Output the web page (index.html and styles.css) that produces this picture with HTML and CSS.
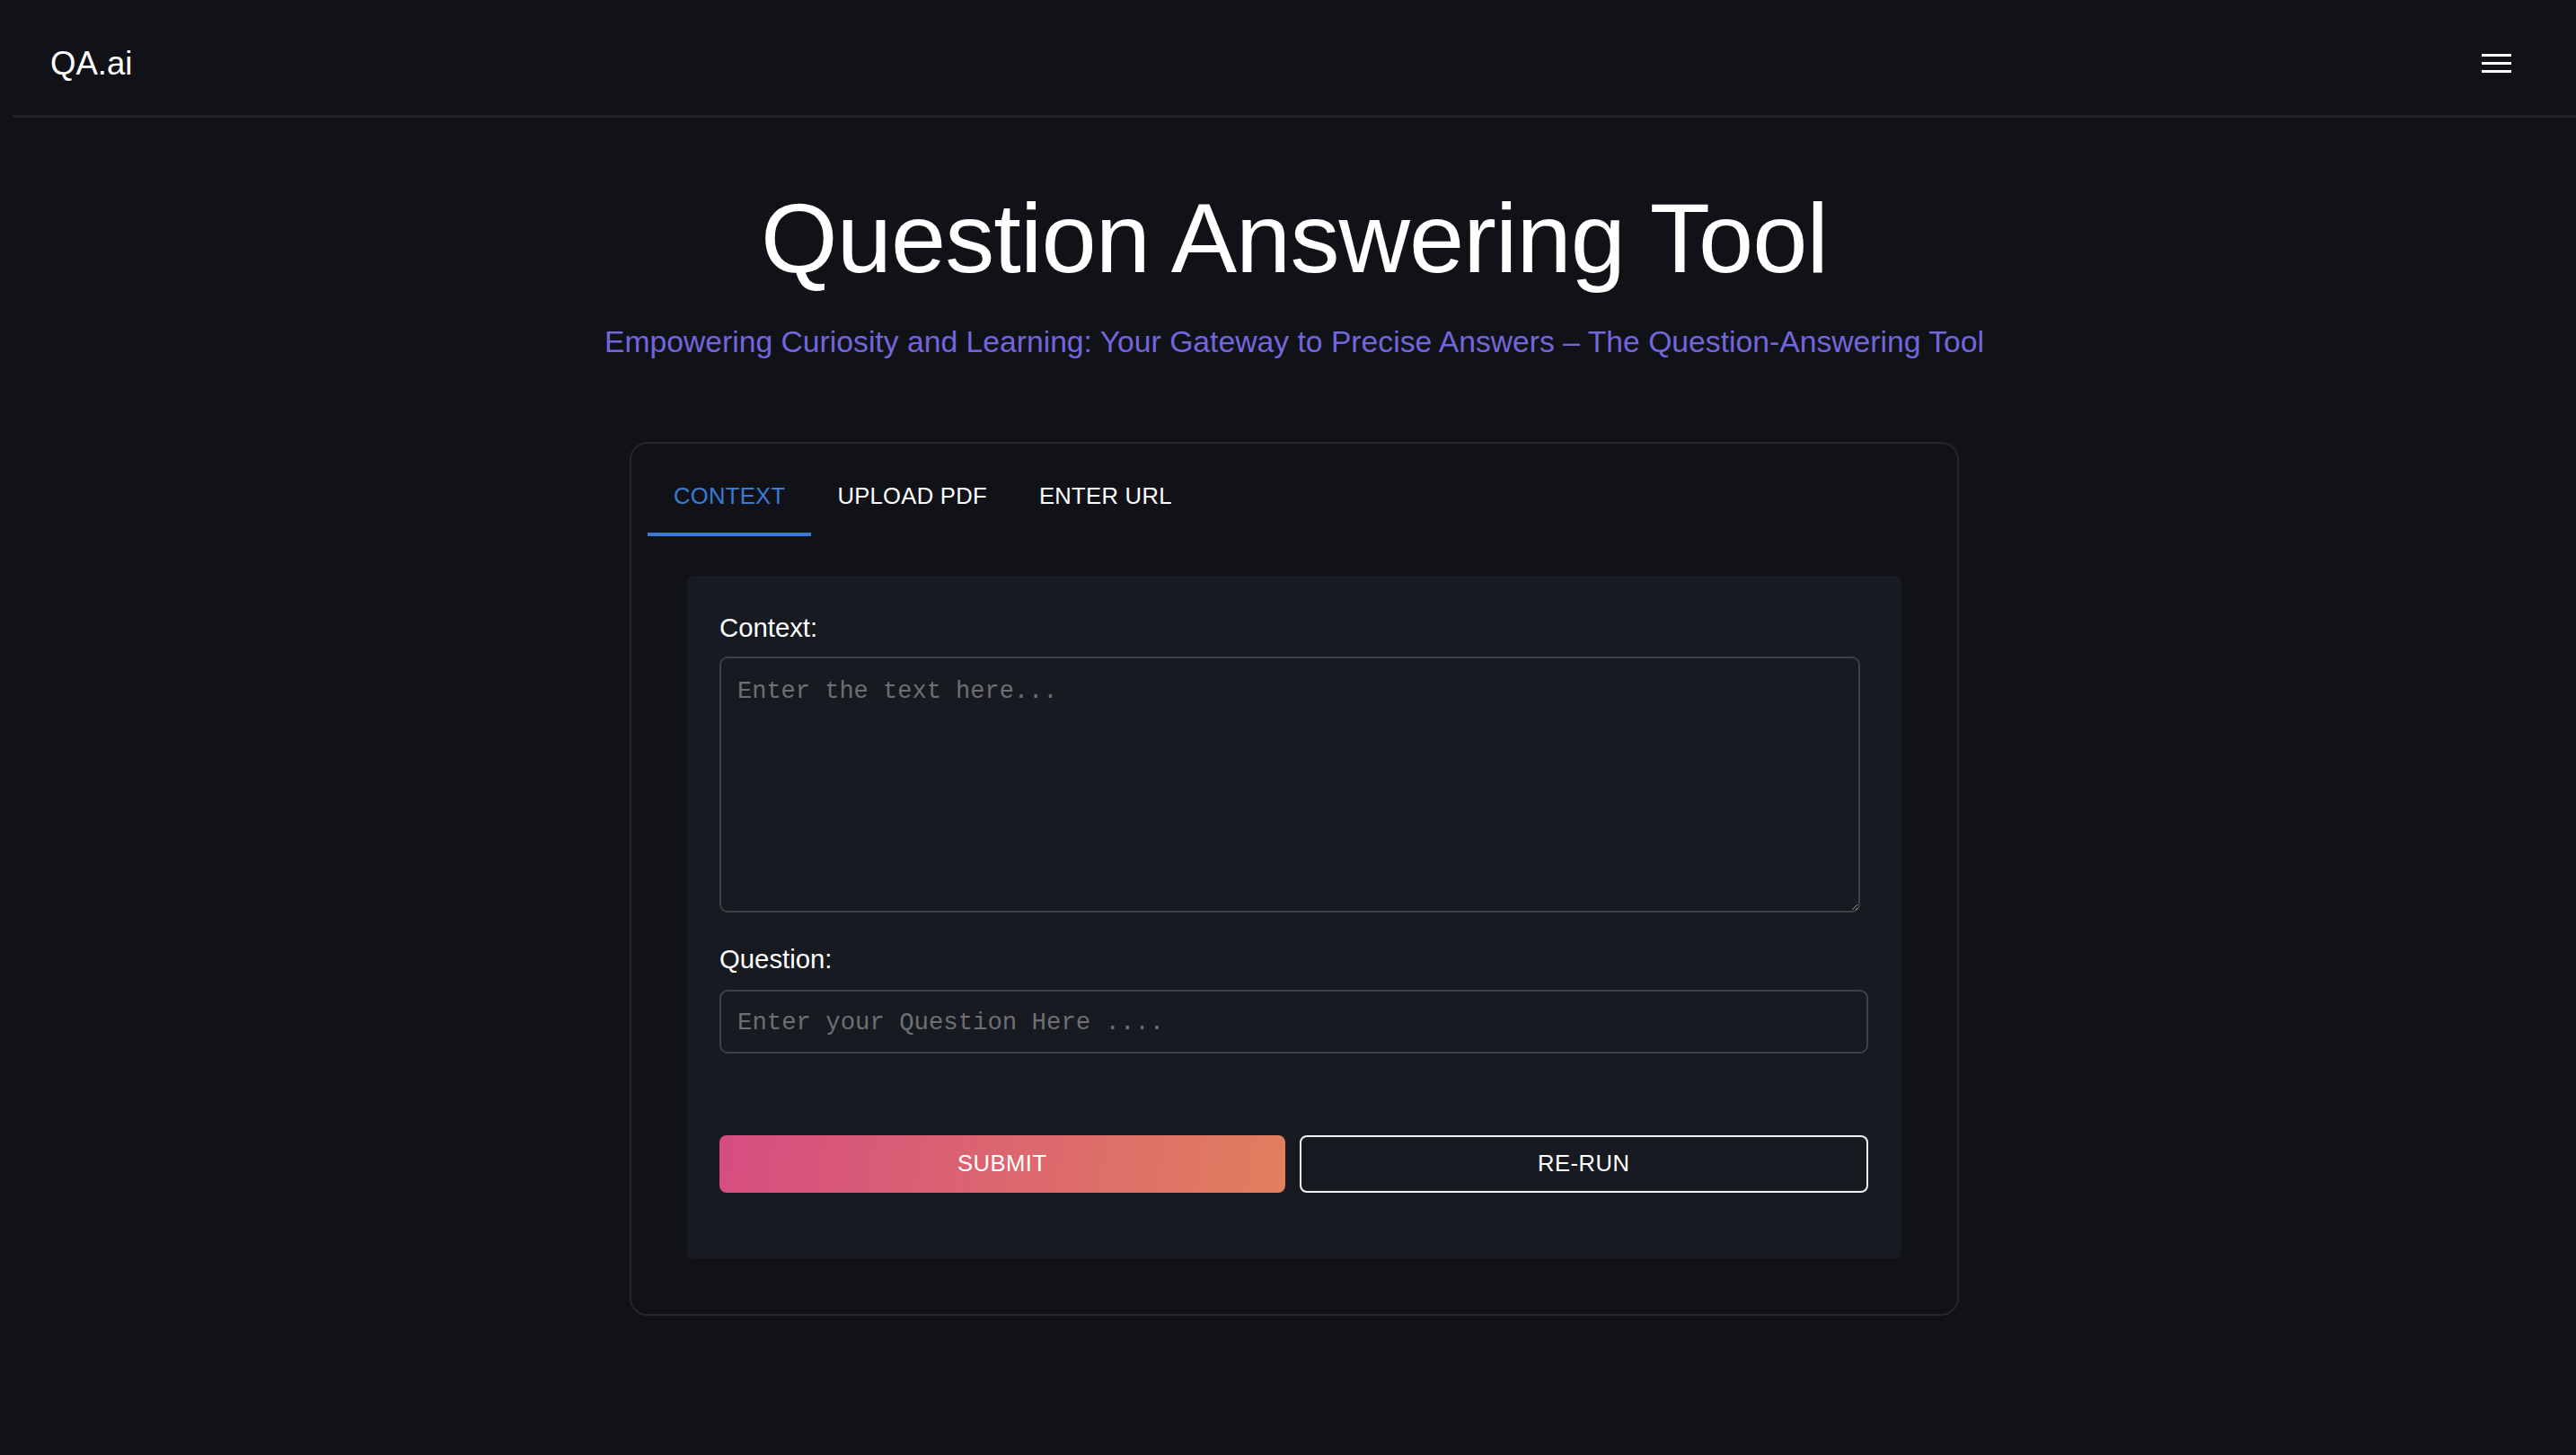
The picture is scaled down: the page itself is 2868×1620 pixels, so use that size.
FILE: index.html
```html
<!DOCTYPE html>
<html lang="en">
<head>
<meta charset="utf-8">
<title>QA.ai</title>
<link rel="stylesheet" href="styles.css">
</head>
<body>
<header class="topbar">
  <div class="logo">QA.ai</div>
  <button class="menu-btn" aria-label="menu">
    <svg width="33" height="21" viewBox="0 0 33 21"><rect x="0" y="0" width="33" height="3" fill="#fff"/><rect x="0" y="9" width="33" height="3" fill="#fff"/><rect x="0" y="18" width="33" height="3" fill="#fff"/></svg>
  </button>
</header>
<main class="main">
  <h1 class="title">Question Answering Tool</h1>
  <p class="subtitle">Empowering Curiosity and Learning: Your Gateway to Precise Answers – The Question-Answering Tool</p>
  <section class="card">
    <nav class="tabs">
      <div class="tab active">Context</div>
      <div class="tab">Upload PDF</div>
      <div class="tab">Enter URL</div>
    </nav>
    <div class="tabpanel">
      <div class="panel">
        <label class="label" for="ctx">Context:</label>
        <textarea id="ctx" class="textarea" placeholder="Enter the text here..."></textarea>
        <label class="label label-q" for="q">Question:</label>
        <input id="q" class="input" type="text" placeholder="Enter your Question Here ....">
        <div class="actions">
          <button class="btn btn-submit">Submit</button>
          <button class="btn btn-rerun">Re-run</button>
        </div>
      </div>
    </div>
  </section>
</main>
</body>
</html>
```
FILE: styles.css
```css
html {
  background: #111217;
}
body {
  margin: 0;
  padding: 14px 0 0 14px;
  min-height: 1606px;
  background: #111217;
  color: #fff;
  font-family: "Liberation Sans", Arial, Helvetica, sans-serif;
}
.topbar {
  box-sizing: border-box;
  height: 117px;
  padding: 0 72px 2px 42px;
  border-bottom: 3px solid #222429;
  display: flex;
  align-items: center;
  justify-content: space-between;
}
.logo {
  font-size: 36.6px;
  line-height: 1;
  padding-top: 2px;
}
.menu-btn {
  background: none;
  border: 0;
  padding: 0;
  display: flex;
  cursor: pointer;
}
.main {
  display: flex;
  flex-direction: column;
  align-items: center;
}
.title {
  margin: 68px 0 0;
  font-size: 110px;
  font-weight: 400;
  line-height: 132px;
  letter-spacing: -0.9px;
}
.subtitle {
  margin: 29px 0 0;
  font-size: 33.7px;
  line-height: 40px;
  color: #7266dc;
}
.card {
  box-sizing: border-box;
  width: 1480px;
  margin-top: 92px;
  border: 2px solid #24262b;
  border-radius: 20px;
  padding: 18px;
}
.tabs {
  display: flex;
}
.tab {
  box-sizing: border-box;
  height: 85px;
  padding: 0 29px;
  border-bottom: 4px solid transparent;
  display: flex;
  align-items: center;
  font-size: 25.6px;
  letter-spacing: 0.3px;
  text-transform: uppercase;
  color: #fff;
}
.tab.active {
  color: #3b7bd6;
  border-bottom-color: #3b7bd6;
}
.tabpanel {
  padding: 44px;
}
.panel {
  background: #171a20;
  border-radius: 6px;
  padding: 41px 37px 73px 36px;
  display: flex;
  flex-direction: column;
}
.label {
  font-size: 29.3px;
  line-height: 34.8px;
  color: #fff;
}
.textarea {
  box-sizing: border-box;
  width: calc(100% - 9px);
  height: 285px;
  margin-top: 14px;
  padding: 22px 18px 18px;
  background: transparent;
  border: 2px solid #3e4045;
  border-radius: 9px;
  color: #ddd;
  font-family: "Liberation Mono", "Courier New", monospace;
  font-size: 27px;
  resize: vertical;
  outline: none;
}
.label-q {
  margin-top: 35px;
}
.input {
  box-sizing: border-box;
  width: 100%;
  height: 71px;
  margin-top: 16px;
  padding: 3px 18px 0;
  background: transparent;
  border: 2px solid #3e4045;
  border-radius: 9px;
  color: #ddd;
  font-family: "Liberation Mono", "Courier New", monospace;
  font-size: 27.3px;
  outline: none;
}
.textarea::placeholder,
.input::placeholder {
  color: #6e6f72;
}
.actions {
  display: flex;
  gap: 16px;
  margin-top: 91px;
}
.btn {
  flex: 1;
  box-sizing: border-box;
  height: 64px;
  border-radius: 8px;
  font-family: "Liberation Sans", Arial, sans-serif;
  font-size: 25.6px;
  letter-spacing: 0.5px;
  text-transform: uppercase;
  color: #fff;
  cursor: pointer;
}
.btn-submit {
  border: 0;
  background: linear-gradient(100deg, #d64d81 0%, #e17f5d 100%);
}
.btn-rerun {
  background: transparent;
  border: 2px solid #f2f2f2;
}
```
